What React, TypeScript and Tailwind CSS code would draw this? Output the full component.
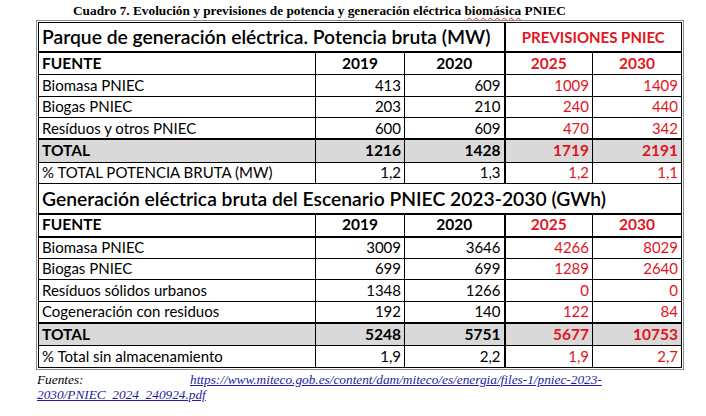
const calibri = { fontFamily: 'Lato, "Noto Sans", sans-serif' };

type Row = { label: string; v: string[]; total?: boolean };

const potencia: Row[] = [
  { label: 'Biomasa PNIEC', v: ['413', '609', '1009', '1409'] },
  { label: 'Biogas PNIEC', v: ['203', '210', '240', '440'] },
  { label: 'Resíduos y otros PNIEC', v: ['600', '609', '470', '342'] },
  { label: 'TOTAL', v: ['1216', '1428', '1719', '2191'], total: true },
  { label: '% TOTAL POTENCIA BRUTA (MW)', v: ['1,2', '1,3', '1,2', '1,1'] },
];

const generacion: Row[] = [
  { label: 'Biomasa PNIEC', v: ['3009', '3646', '4266', '8029'] },
  { label: 'Biogas PNIEC', v: ['699', '699', '1289', '2640'] },
  { label: 'Resíduos sólidos urbanos', v: ['1348', '1266', '0', '0'] },
  { label: 'Cogeneración con residuos', v: ['192', '140', '122', '84'] },
  { label: 'TOTAL', v: ['5248', '5751', '5677', '10753'], total: true },
  { label: '% Total sin almacenamiento', v: ['1,9', '2,2', '1,9', '2,7'] },
];

function HeaderRow({ thick }: { thick?: boolean }) {
  const b = thick ? 'border-b-2' : 'border-b';
  return (
    <tr className="h-[23px] text-[15.5px] font-bold">
      <td className={`border border-black ${b} pl-[3px] text-left`}>FUENTE</td>
      <td className={`border border-black ${b} text-center`}>2019</td>
      <td className={`border border-black border-r-2 ${b} text-center`}>2020</td>
      <td className={`border border-black ${b} text-center text-[#e3141d]`}>2025</td>
      <td className={`border border-black ${b} text-center text-[#e3141d]`}>2030</td>
    </tr>
  );
}

function DataRows({ rows }: { rows: Row[] }) {
  return (
    <>
      {rows.map((r) => {
        const top = r.total ? 'border-t-2' : 'border-t';
        const bg = r.total ? 'bg-[#d9d9d9] font-bold text-[15.5px] h-[23px]' : 'text-[15px] h-[21.5px]';
        return (
          <tr key={r.label} className={bg}>
            <td className={`border border-black ${top} pl-[3px] text-left whitespace-nowrap`}>{r.label}</td>
            <td className={`border border-black ${top} pr-[3px] text-right`}>{r.v[0]}</td>
            <td className={`border border-black border-r-2 ${top} pr-[3px] text-right`}>{r.v[1]}</td>
            <td className={`border border-black ${top} pr-[3px] text-right text-[#e3141d]`}>{r.v[2]}</td>
            <td className={`border border-black ${top} pr-[3px] text-right text-[#e3141d]`}>{r.v[3]}</td>
          </tr>
        );
      })}
    </>
  );
}

export default function App() {
  return (
    <div className="w-[706px] h-[416px] bg-white overflow-hidden text-black">
      <p
        className="pl-[73px] pt-[3px] h-[20px] text-[13.3px] font-bold leading-[16px] whitespace-nowrap"
        style={{ fontFamily: '"Liberation Serif", serif' }}
      >
        Cuadro 7. Evolución y previsiones de potencia y generación eléctrica{' '}
        <span className="underline decoration-wavy decoration-[#d03030] decoration-1 underline-offset-2">
          biomásica
        </span>{' '}
        PNIEC
      </p>

      <div className="ml-[38px] mt-[2px] w-[644px] outline outline-1 outline-[#8a8a8a] outline-offset-1">
        <table className="w-full table-fixed border-collapse border border-black leading-none" style={calibri}>
          <colgroup>
            <col className="w-[277px]" />
            <col className="w-[89px]" />
            <col className="w-[100px]" />
            <col className="w-[88px]" />
            <col className="w-[89px]" />
          </colgroup>
          <tbody>
            <tr className="h-[29px]">
              <td
                colSpan={3}
                className="border border-black border-r-2 border-b-2 pl-[3px] text-[19.3px] font-semibold whitespace-nowrap"
              >
                Parque de generación eléctrica. Potencia bruta (MW)
              </td>
              <td colSpan={2} className="border border-black border-b-2 pt-[2px] text-center text-[15px] font-bold text-[#e3141d]">
                PREVISIONES PNIEC
              </td>
            </tr>
            <HeaderRow />
            <DataRows rows={potencia} />
            <tr className="h-[30px]">
              <td colSpan={5} className="border border-black border-b-2 pl-[3px] text-[19.3px] font-semibold whitespace-nowrap">
                Generación eléctrica bruta del Escenario PNIEC 2023-2030 (GWh)
              </td>
            </tr>
            <HeaderRow thick />
            <DataRows rows={generacion} />
          </tbody>
        </table>
      </div>

      <div
        className="pl-[37px] mt-[4px] text-[13.3px] italic leading-[15px] whitespace-nowrap"
        style={{ fontFamily: '"Liberation Serif", serif' }}
      >
        <div className="flex">
          <span className="w-[153px]">Fuentes:</span>
          <span className="underline text-[#1d1da0]">
            https://www.miteco.gob.es/content/dam/miteco/es/energia/files-1/pniec-2023-
          </span>
        </div>
        <div className="underline text-[#1d1da0] w-fit">2030/PNIEC_2024_240924.pdf</div>
      </div>
    </div>
  );
}
